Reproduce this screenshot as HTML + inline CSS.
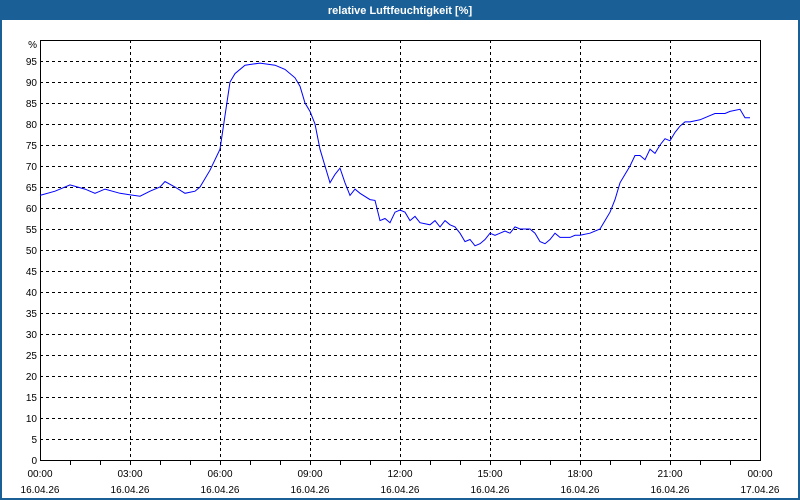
<!DOCTYPE html>
<html><head><meta charset="utf-8"><style>
body{margin:0;width:800px;height:500px;overflow:hidden;background:#fff;font-family:"Liberation Sans",sans-serif}
</style></head><body>
<svg width="800" height="500" xmlns="http://www.w3.org/2000/svg" style="display:block">
<rect x="0" y="0" width="800" height="500" fill="#1a5f96"/>
<rect x="2" y="20" width="796" height="478" fill="#fff"/>
<text x="400" y="14" fill="#fff" font-size="11" font-weight="bold" text-anchor="middle" font-family="Liberation Sans">relative Luftfeuchtigkeit [%]</text>
<g stroke="#000" stroke-width="1" stroke-dasharray="3,3" shape-rendering="crispEdges">
<line x1="40" x2="760" y1="61.5" y2="61.5"/><line x1="40" x2="760" y1="82.5" y2="82.5"/><line x1="40" x2="760" y1="103.5" y2="103.5"/><line x1="40" x2="760" y1="124.5" y2="124.5"/><line x1="40" x2="760" y1="145.5" y2="145.5"/><line x1="40" x2="760" y1="166.5" y2="166.5"/><line x1="40" x2="760" y1="187.5" y2="187.5"/><line x1="40" x2="760" y1="208.5" y2="208.5"/><line x1="40" x2="760" y1="229.5" y2="229.5"/><line x1="40" x2="760" y1="250.5" y2="250.5"/><line x1="40" x2="760" y1="271.5" y2="271.5"/><line x1="40" x2="760" y1="292.5" y2="292.5"/><line x1="40" x2="760" y1="313.5" y2="313.5"/><line x1="40" x2="760" y1="334.5" y2="334.5"/><line x1="40" x2="760" y1="355.5" y2="355.5"/><line x1="40" x2="760" y1="376.5" y2="376.5"/><line x1="40" x2="760" y1="397.5" y2="397.5"/><line x1="40" x2="760" y1="418.5" y2="418.5"/><line x1="40" x2="760" y1="439.5" y2="439.5"/>
<line y1="40" y2="460" x1="130.5" x2="130.5"/><line y1="40" y2="460" x1="220.5" x2="220.5"/><line y1="40" y2="460" x1="310.5" x2="310.5"/><line y1="40" y2="460" x1="400.5" x2="400.5"/><line y1="40" y2="460" x1="490.5" x2="490.5"/><line y1="40" y2="460" x1="580.5" x2="580.5"/><line y1="40" y2="460" x1="670.5" x2="670.5"/>
</g>
<rect x="40.5" y="40.5" width="720" height="420" fill="none" stroke="#000" stroke-width="1" shape-rendering="crispEdges"/>
<g stroke="#000" shape-rendering="crispEdges">
<line x1="70.5" x2="70.5" y1="460" y2="465"/><line x1="100.5" x2="100.5" y1="460" y2="465"/><line x1="130.5" x2="130.5" y1="460" y2="465"/><line x1="160.5" x2="160.5" y1="460" y2="465"/><line x1="190.5" x2="190.5" y1="460" y2="465"/><line x1="220.5" x2="220.5" y1="460" y2="465"/><line x1="250.5" x2="250.5" y1="460" y2="465"/><line x1="280.5" x2="280.5" y1="460" y2="465"/><line x1="310.5" x2="310.5" y1="460" y2="465"/><line x1="340.5" x2="340.5" y1="460" y2="465"/><line x1="370.5" x2="370.5" y1="460" y2="465"/><line x1="400.5" x2="400.5" y1="460" y2="465"/><line x1="430.5" x2="430.5" y1="460" y2="465"/><line x1="460.5" x2="460.5" y1="460" y2="465"/><line x1="490.5" x2="490.5" y1="460" y2="465"/><line x1="520.5" x2="520.5" y1="460" y2="465"/><line x1="550.5" x2="550.5" y1="460" y2="465"/><line x1="580.5" x2="580.5" y1="460" y2="465"/><line x1="610.5" x2="610.5" y1="460" y2="465"/><line x1="640.5" x2="640.5" y1="460" y2="465"/><line x1="670.5" x2="670.5" y1="460" y2="465"/><line x1="700.5" x2="700.5" y1="460" y2="465"/><line x1="730.5" x2="730.5" y1="460" y2="465"/>
</g>
<g font-size="10" fill="#000" text-anchor="end" font-family="Liberation Sans">
<text x="37" y="48">%</text><text x="37" y="65">95</text><text x="37" y="86">90</text><text x="37" y="107">85</text><text x="37" y="128">80</text><text x="37" y="149">75</text><text x="37" y="170">70</text><text x="37" y="191">65</text><text x="37" y="212">60</text><text x="37" y="233">55</text><text x="37" y="254">50</text><text x="37" y="275">45</text><text x="37" y="296">40</text><text x="37" y="317">35</text><text x="37" y="338">30</text><text x="37" y="359">25</text><text x="37" y="380">20</text><text x="37" y="401">15</text><text x="37" y="422">10</text><text x="37" y="443">5</text><text x="37" y="464">0</text>
</g>
<g font-size="10" fill="#000" text-anchor="middle" font-family="Liberation Sans">
<text x="40" y="477">00:00</text><text x="40" y="493">16.04.26</text>
<text x="130" y="477">03:00</text><text x="130" y="493">16.04.26</text>
<text x="220" y="477">06:00</text><text x="220" y="493">16.04.26</text>
<text x="310" y="477">09:00</text><text x="310" y="493">16.04.26</text>
<text x="400" y="477">12:00</text><text x="400" y="493">16.04.26</text>
<text x="490" y="477">15:00</text><text x="490" y="493">16.04.26</text>
<text x="580" y="477">18:00</text><text x="580" y="493">16.04.26</text>
<text x="670" y="477">21:00</text><text x="670" y="493">16.04.26</text>
<text x="760" y="477">00:00</text><text x="760" y="493">17.04.26</text>
</g>
<g transform="translate(0,460) scale(1,-4.2)">
<polyline fill="none" stroke="#0000ff" stroke-width="1" vector-effect="non-scaling-stroke" points="40,63 55,64 70,65.5 85,64.5 95,63.5 105,64.5 120,63.5 140,62.8 150,64 160,65 165,66.3 175,65 185,63.5 195,64 200,65 210,69 220,74 225,82 230,90 235,92 245,94 260,94.5 275,94 285,93 295,91 300,89 305,85 310,83 315,80 320,74 325,70 330,66 335,68 340,69.5 345,66 350,63 355,64.5 360,63.5 370,62 375,61.8 380,57 385,57.5 390,56.5 395,59 400,59.5 405,59 410,57 415,58 420,56.5 430,56 435,57 440,55.5 445,57 450,56 455,55.5 460,54 465,52 470,52.5 475,51 480,51.5 485,52.5 490,54 495,53.5 500,54 505,54.5 510,54 515,55.5 520,55 530,55 535,54 540,52 545,51.5 550,52.5 555,54 560,53 570,53 575,53.5 580,53.5 590,54 600,55 605,57 610,59 615,62 620,66 625,68 630,70 635,72.5 640,72.5 645,71.5 650,74 655,73 660,75 665,76.5 670,76 675,78 680,79.5 685,80.5 690,80.5 700,81 705,81.5 710,82 715,82.5 725,82.5 730,83 740,83.5 745,81.5 750,81.5"/>
</g>
</svg>
</body></html>
